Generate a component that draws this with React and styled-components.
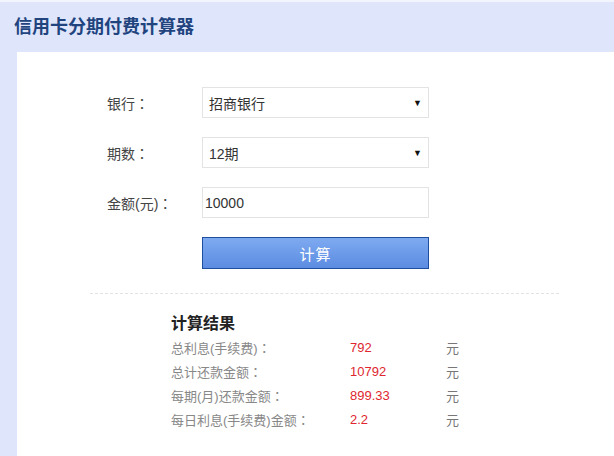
import React from 'react';
import styled, {createGlobalStyle} from 'styled-components';

const GlobalStyle = createGlobalStyle`
    html, body {
        margin: 0;
        padding: 0;
        background: #dfe6fb;
        font-family: "Liberation Sans", Arial, "Noto Sans CJK SC", sans-serif;
    }
    body {
        border-top: 2px solid #f2f5fd;
    }
`;

const results = [
    {label: '总利息(手续费)', value: '792'},
    {label: '总计还款金额', value: '10792'},
    {label: '每期(月)还款金额', value: '899.33'},
    {label: '每日利息(手续费)金额', value: '2.2'},
];

const App = () => {
    return (
        <>
        <GlobalStyle />
        <Page>
            <Header>信用卡分期付费计算器</Header>
            <Panel>
                <Form>
                    <Row>
                        <Label>银行<Colon>：</Colon></Label>
                        <SelectBox>
                            <span>招商银行</span>
                            <Arrow>▼</Arrow>
                        </SelectBox>
                    </Row>
                    <Row>
                        <Label>期数<Colon>：</Colon></Label>
                        <SelectBox>
                            <span>12期</span>
                            <Arrow>▼</Arrow>
                        </SelectBox>
                    </Row>
                    <Row>
                        <Label>金额(元)<Colon>：</Colon></Label>
                        <Input defaultValue="10000" />
                    </Row>
                    <ButtonRow>
                        <CalcButton>计算</CalcButton>
                    </ButtonRow>
                </Form>
                <Divider />
                <Results>
                    <ResultTitle>计算结果</ResultTitle>
                    {results.map((r) => (
                        <ResultRow key={r.label}>
                            <ResultLabel>{r.label}<Colon>：</Colon></ResultLabel>
                            <ResultValue>{r.value}</ResultValue>
                            <Unit>元</Unit>
                        </ResultRow>
                    ))}
                </Results>
            </Panel>
        </Page>
        </>
    );
};

const Page = styled.div`
    width: 614px;
    min-height: 454px;
    display: flex;
    flex-direction: column;
`;

const Header = styled.h1`
    margin: 0;
    height: 50px;
    line-height: 50px;
    padding-left: 14px;
    font-size: 18px;
    font-weight: bold;
    color: #21447f;
`;

const Panel = styled.div`
    margin-left: 17px;
    background: #fff;
    flex: 1;
    padding-top: 35px;
`;

const Form = styled.div`
    display: flex;
    flex-direction: column;
    gap: 19px;
    padding-left: 90px;
`;

const Row = styled.div`
    display: flex;
    align-items: center;
`;

const Label = styled.div`
    width: 95px;
    font-size: 14px;
    color: #444;
`;

const Colon = styled.span`
    font-family: "Noto Sans CJK TC", sans-serif;
`;

const SelectBox = styled.div`
    width: 227px;
    height: 31px;
    box-sizing: border-box;
    border: 1px solid #e3e3e3;
    display: flex;
    align-items: center;
    justify-content: space-between;
    padding: 0 6px 0 6px;
    font-size: 14px;
    color: #333;
`;

const Arrow = styled.span`
    font-size: 9px;
    color: #111;
`;

const Input = styled.input`
    width: 227px;
    height: 31px;
    box-sizing: border-box;
    border: 1px solid #e3e3e3;
    padding: 0 2px;
    font-family: inherit;
    font-size: 14px;
    color: #333;
    outline: none;
`;

const ButtonRow = styled.div`
    padding-left: 95px;
`;

const CalcButton = styled.button`
    width: 227px;
    height: 32px;
    border: 1px solid #1d4f9e;
    background: linear-gradient(#7eaaf0, #5c8ce2);
    color: #fff;
    font-family: inherit;
    font-size: 15px;
    letter-spacing: 1px;
    padding: 0;
`;

const Divider = styled.div`
    margin: 24px 55px 0 73px;
    border-top: 1px dashed #e2e2e2;
`;

const Results = styled.div`
    padding: 19px 0 0 154px;
`;

const ResultTitle = styled.div`
    font-size: 16px;
    font-weight: bold;
    color: #222;
    line-height: 22px;
`;

const ResultRow = styled.div`
    display: flex;
    height: 24px;
    align-items: center;
    font-size: 13px;
`;

const ResultLabel = styled.span`
    width: 179px;
    color: #888;
`;

const ResultValue = styled.span`
    width: 96px;
    color: #e0262f;
`;

const Unit = styled.span`
    color: #777;
`;

export default App;
